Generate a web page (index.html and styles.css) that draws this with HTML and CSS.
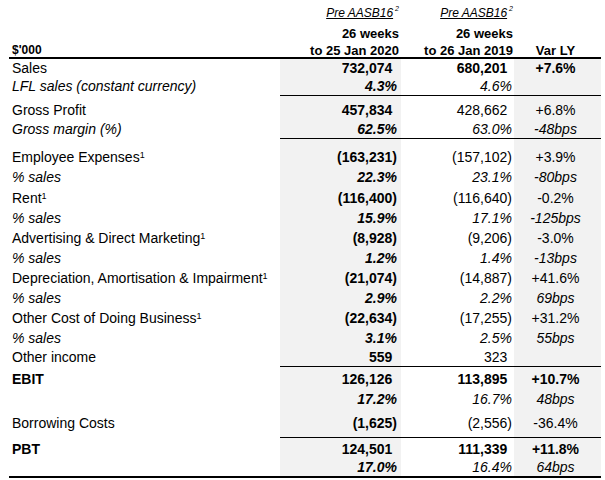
FILE: index.html
```html
<!DOCTYPE html>
<html>
<head>
<meta charset="utf-8">
<link rel="stylesheet" href="styles.css">
</head>
<body>
<div class="sheet">
  <div class="head">
    <div class="row ha">
      <div class="c lbl"></div>
      <div class="c h1"><span class="pre">Pre AASB16</span><sup class="hs">2</sup></div>
      <div class="c h2"><span class="pre">Pre AASB16</span><sup class="hs">2</sup></div>
      <div class="c h3"></div>
    </div>
    <div class="row hb">
      <div class="c lbl"></div>
      <div class="c h1">26 weeks</div>
      <div class="c h2">26 weeks</div>
      <div class="c h3"></div>
    </div>
    <div class="row hc">
      <div class="c lbl">$'000</div>
      <div class="c h1">to 25 Jan 2020</div>
      <div class="c h2">to 26 Jan 2019</div>
      <div class="c h3">Var LY</div>
    </div>
  </div>

  <div class="row l19">
    <div class="c lbl">Sales</div>
    <div class="c v1 b pos">732,074</div>
    <div class="c v2 b pos">680,201</div>
    <div class="c v3 b">+7.6%</div>
  </div>
  <div class="row l17 rule">
    <div class="c lbl i">LFL sales (constant currency)</div>
    <div class="c v1 b i">4.3%</div>
    <div class="c v2 i">4.6%</div>
    <div class="c v3"></div>
  </div>
  <div class="row l19 pt5">
    <div class="c lbl">Gross Profit</div>
    <div class="c v1 b pos">457,834</div>
    <div class="c v2 pos">428,662</div>
    <div class="c v3">+6.8%</div>
  </div>
  <div class="row l18 rule">
    <div class="c lbl i">Gross margin (%)</div>
    <div class="c v1 b i">62.5%</div>
    <div class="c v2 i">63.0%</div>
    <div class="c v3 i">-48bps</div>
  </div>
  <div class="row l20 pt8">
    <div class="c lbl">Employee Expenses<sup class="fn">1</sup></div>
    <div class="c v1 b">(163,231)</div>
    <div class="c v2">(157,102)</div>
    <div class="c v3">+3.9%</div>
  </div>
  <div class="row l21">
    <div class="c lbl i">% sales</div>
    <div class="c v1 b i">22.3%</div>
    <div class="c v2 i">23.1%</div>
    <div class="c v3 i">-80bps</div>
  </div>
  <div class="row l20">
    <div class="c lbl">Rent<sup class="fn">1</sup></div>
    <div class="c v1 b">(116,400)</div>
    <div class="c v2">(116,640)</div>
    <div class="c v3">-0.2%</div>
  </div>
  <div class="row l20">
    <div class="c lbl i">% sales</div>
    <div class="c v1 b i">15.9%</div>
    <div class="c v2 i">17.1%</div>
    <div class="c v3 i">-125bps</div>
  </div>
  <div class="row l20">
    <div class="c lbl">Advertising &amp; Direct Marketing<sup class="fn">1</sup></div>
    <div class="c v1 b">(8,928)</div>
    <div class="c v2">(9,206)</div>
    <div class="c v3">-3.0%</div>
  </div>
  <div class="row l20">
    <div class="c lbl i">% sales</div>
    <div class="c v1 b i">1.2%</div>
    <div class="c v2 i">1.4%</div>
    <div class="c v3 i">-13bps</div>
  </div>
  <div class="row l20">
    <div class="c lbl">Depreciation, Amortisation &amp; Impairment<sup class="fn">1</sup></div>
    <div class="c v1 b">(21,074)</div>
    <div class="c v2">(14,887)</div>
    <div class="c v3">+41.6%</div>
  </div>
  <div class="row l20">
    <div class="c lbl i">% sales</div>
    <div class="c v1 b i">2.9%</div>
    <div class="c v2 i">2.2%</div>
    <div class="c v3 i">69bps</div>
  </div>
  <div class="row l20">
    <div class="c lbl">Other Cost of Doing Business<sup class="fn">1</sup></div>
    <div class="c v1 b">(22,634)</div>
    <div class="c v2">(17,255)</div>
    <div class="c v3">+31.2%</div>
  </div>
  <div class="row l20">
    <div class="c lbl i">% sales</div>
    <div class="c v1 b i">3.1%</div>
    <div class="c v2 i">2.5%</div>
    <div class="c v3 i">55bps</div>
  </div>
  <div class="row l18 rule">
    <div class="c lbl">Other income</div>
    <div class="c v1 b pos">559</div>
    <div class="c v2 pos">323</div>
    <div class="c v3"></div>
  </div>
  <div class="row l20 pt2">
    <div class="c lbl b">EBIT</div>
    <div class="c v1 b pos">126,126</div>
    <div class="c v2 b pos">113,895</div>
    <div class="c v3 b">+10.7%</div>
  </div>
  <div class="row l20">
    <div class="c lbl"></div>
    <div class="c v1 b i">17.2%</div>
    <div class="c v2 i">16.7%</div>
    <div class="c v3 i">48bps</div>
  </div>
  <div class="row l20 pt4 pb4 rule">
    <div class="c lbl">Borrowing Costs</div>
    <div class="c v1 b">(1,625)</div>
    <div class="c v2">(2,556)</div>
    <div class="c v3">-36.4%</div>
  </div>
  <div class="row l20 pt1">
    <div class="c lbl b">PBT</div>
    <div class="c v1 b pos">124,501</div>
    <div class="c v2 b pos">111,339</div>
    <div class="c v3 b">+11.8%</div>
  </div>
  <div class="row l17 last">
    <div class="c lbl"></div>
    <div class="c v1 b i">17.0%</div>
    <div class="c v2 i">16.4%</div>
    <div class="c v3 i">64bps</div>
  </div>
</div>
</body>
</html>
```

FILE: styles.css
```css
html, body {
  margin: 0;
  padding: 0;
  background: #ffffff;
}

body {
  font-family: "Liberation Sans", Arial, sans-serif;
  font-size: 14px;
  color: #000000;
}

.sheet {
  margin-left: 9px;
  width: 592px;
}

.row {
  display: grid;
  grid-template-columns: 271px 121px 113px 87px;
}

.c {
  white-space: nowrap;
  overflow: visible;
}

.lbl {
  padding-left: 3px;
  text-align: left;
}

.v1 {
  text-align: right;
  padding-right: 4px;
  background: #f2f2f2;
}

.v2 {
  text-align: right;
  padding-right: 2px;
}

.v3 {
  text-align: center;
  padding-right: 4px;
  background: #f2f2f2;
}

.pos.v1 {
  padding-right: calc(4px + 0.333em);
}

.pos.v2 {
  padding-right: calc(2px + 0.333em);
}

.b { font-weight: bold; }
.i { font-style: italic; }

/* line heights */
.l17 > .c { line-height: 17px; }
.l18 > .c { line-height: 18px; }
.l19 > .c { line-height: 19px; }
.l20 > .c { line-height: 20px; }
.l21 > .c { line-height: 21px; }

/* spacing */
.pt1 > .c { padding-top: 1px; }
.pt2 > .c { padding-top: 2px; }
.pt4 > .c { padding-top: 4px; }
.pt5 > .c { padding-top: 5px; }
.pt8 > .c { padding-top: 8px; }
.pb4 > .c { padding-bottom: 4px; }

.rule > .v1,
.rule > .v2,
.rule > .v3 {
  border-bottom: 1px solid #000000;
}

.last {
  border-bottom: 2px solid #000000;
}

/* header */
.head {
  border-bottom: 2px solid #000000;
}

.head .c {
  font-weight: bold;
  font-size: 13px;
}

.head .h1 {
  text-align: right;
  padding-right: 2px;
}

.head .h2 {
  text-align: right;
  padding-right: 1px;
}

.head .h3 {
  text-align: center;
  padding-right: 4px;
}

.ha > .c {
  padding-top: 3px;
  line-height: 19px;
}

.hb > .c {
  line-height: 21px;
}

.hc > .c {
  line-height: 13px;
}

.head .lbl {
  font-size: 12px;
}

.pre {
  font-size: 12px;
  font-weight: normal;
  font-style: italic;
  text-decoration: underline;
}

.hs {
  font-size: 7px;
  font-weight: normal;
  font-style: italic;
  line-height: 0;
  vertical-align: 6px;
  margin-left: 2px;
}

.fn {
  font-size: 9px;
  line-height: 0;
  vertical-align: 4px;
  font-style: normal;
  font-weight: normal;
}
```
